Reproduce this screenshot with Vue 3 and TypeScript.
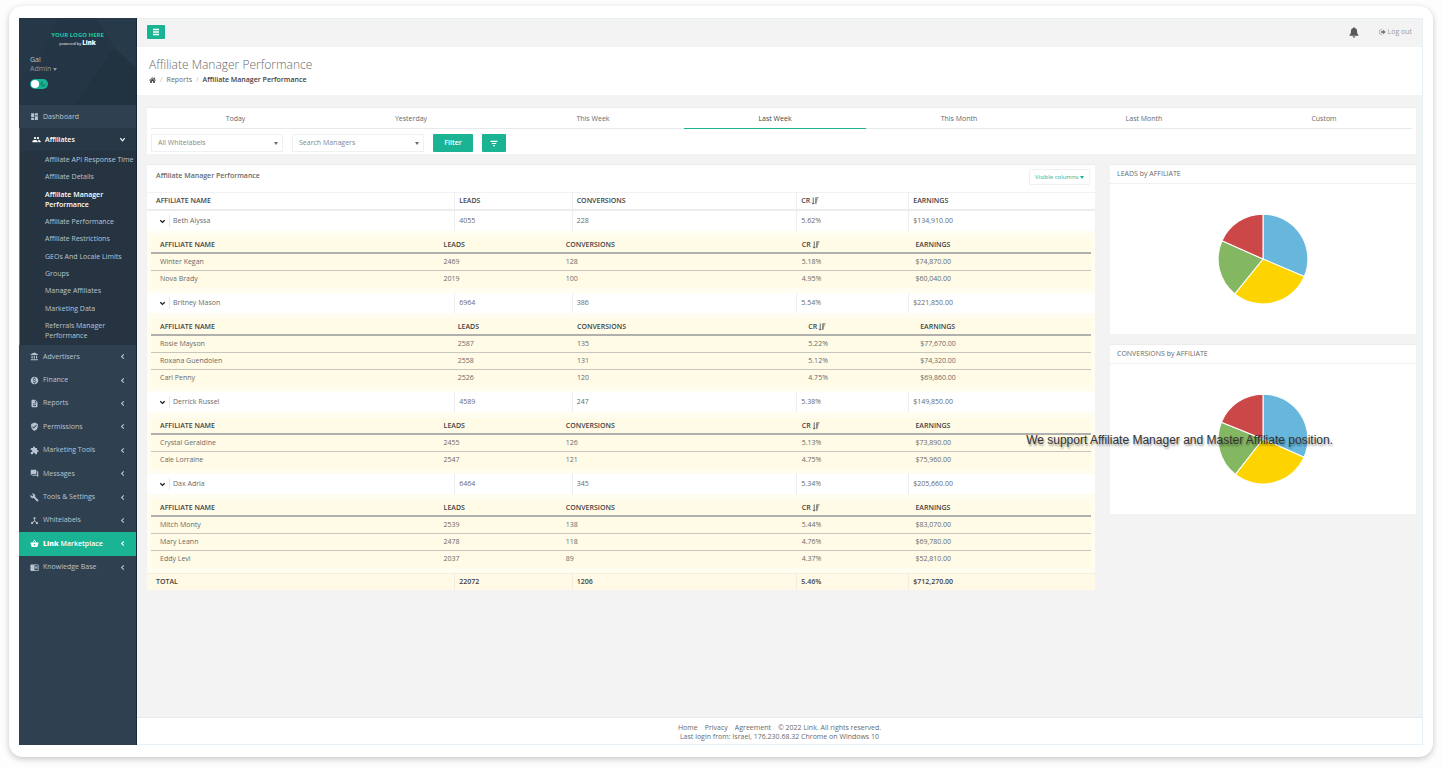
<script setup lang="ts">
import { ref } from 'vue'

interface NavItem {
  label: string
  icon: string
  brand?: boolean
}

interface Stat {
  name: string
  leads: string
  conversions: string
  cr: string
  earnings: string
}

interface Manager extends Stat {
  affiliates: Stat[]
  wide?: boolean
}

interface Slice {
  color: string
  d: string
}

const icons = {
  dashboard: 'M3 13h8V3H3v10zm0 8h8v-6H3v6zm10 0h8V11h-8v10zm0-18v6h8V3h-8z',
  group:
    'M16 11c1.66 0 2.99-1.34 2.99-3S17.66 5 16 5s-3 1.34-3 3 1.34 3 3 3zm-8 0c1.66 0 2.99-1.34 2.99-3S9.66 5 8 5 5 6.34 5 8s1.34 3 3 3zm0 2c-2.33 0-7 1.17-7 3.5V19h14v-2.5c0-2.33-4.67-3.5-7-3.5zm8 0c-.29 0-.62.02-.97.05 1.16.84 1.97 1.97 1.97 3.45V19h6v-2.5c0-2.33-4.67-3.5-7-3.5z',
  bank: 'M4 10v7h3v-7H4zm6 0v7h3v-7h-3zM2 22h19v-3H2v3zm14-12v7h3v-7h-3zM11.5 1L2 6v2h19V6l-9.5-5z',
  money:
    'M12 2C6.48 2 2 6.48 2 12s4.48 10 10 10 10-4.48 10-10S17.52 2 12 2zm1.41 16.09V20h-2.67v-1.93c-1.71-.36-3.16-1.46-3.27-3.4h1.96c.1 1.05.82 1.87 2.65 1.87 1.96 0 2.4-.98 2.4-1.59 0-.83-.44-1.61-2.67-2.14-2.48-.6-4.18-1.62-4.18-3.67 0-1.72 1.39-2.84 3.11-3.21V4h2.67v1.95c1.86.45 2.79 1.86 2.85 3.39H14.3c-.05-1.11-.64-1.87-2.22-1.87-1.5 0-2.4.68-2.4 1.64 0 .84.65 1.39 2.67 1.91s4.18 1.39 4.18 3.91c-.01 1.83-1.38 2.83-3.12 3.16z',
  file: 'M14 2H6c-1.1 0-1.99.9-1.99 2L4 20c0 1.1.89 2 1.99 2H18c1.1 0 2-.9 2-2V8l-6-6zm2 16H8v-2h8v2zm0-4H8v-2h8v2zm-3-5V3.5L18.5 9H13z',
  shield:
    'M12 1L3 5v6c0 5.55 3.84 10.74 9 12 5.16-1.26 9-6.45 9-12V5l-9-4zm-2 16l-4-4 1.41-1.41L10 14.17l6.59-6.59L18 9l-8 8z',
  puzzle:
    'M20.5 11H19V7c0-1.1-.9-2-2-2h-4V3.5C13 2.12 11.88 1 10.5 1S8 2.12 8 3.5V5H4c-1.1 0-1.99.9-1.99 2v3.8H3.5c1.49 0 2.7 1.21 2.7 2.7s-1.21 2.7-2.7 2.7H2V20c0 1.1.9 2 2 2h3.8v-1.5c0-1.49 1.21-2.7 2.7-2.7 1.49 0 2.7 1.21 2.7 2.7V22H17c1.1 0 2-.9 2-2v-4h1.5c1.38 0 2.5-1.12 2.5-2.5S21.88 11 20.5 11z',
  chat: 'M21 6h-2v9H6v2c0 .55.45 1 1 1h11l4 4V7c0-.55-.45-1-1-1zm-4 6V3c0-.55-.45-1-1-1H3c-.55 0-1 .45-1 1v14l4-4h10c.55 0 1-.45 1-1z',
  wrench:
    'M22.700 19l-9.100-9.100c.9-2.300.4-5-1.500-6.900-2-2-5-2.400-7.400-1.300L9 6 6 9 1.600 4.700C.4 7.100.9 10.100 2.900 12.100c1.900 1.900 4.600 2.400 6.900 1.500l9.100 9.100c.4.4 1 .4 1.400 0l2.300-2.300c.5-.4.5-1.100.1-1.400z',
  hub: 'M17 16l-4-4V8.820C14.160 8.400 15 7.300 15 6c0-1.660-1.340-3-3-3S9 4.340 9 6c0 1.300.84 2.400 2 2.820V12l-4 4H3v5h5v-3.050l4-4.200 4 4.200V21h5v-5h-4z',
  basket:
    'M17.210 9l-4.380-6.560c-.19-.28-.51-.42-.83-.42-.32 0-.64.14-.83.430L6.790 9H2c-.55 0-1 .45-1 1 0 .09.010.18.040.27l2.540 9.270c.23.84 1 1.460 1.920 1.460h13c.92 0 1.690-.62 1.930-1.460l2.540-9.270L23 10c0-.55-.45-1-1-1h-4.790zM9 9l3-4.400L15 9H9zm3 8c-1.100 0-2-.9-2-2s.9-2 2-2 2 .9 2 2-.9 2-2 2z',
  book: 'M13 12h7v1.500h-7zm0-2.500h7V11h-7zm0 5h7V16h-7zM21 4H3c-1.100 0-2 .9-2 2v13c0 1.100.9 2 2 2h18c1.100 0 2-.9 2-2V6c0-1.100-.9-2-2-2zm0 15h-9V6h9v13z',
}

const nav: NavItem[] = [
  { label: 'Advertisers', icon: icons.bank },
  { label: 'Finance', icon: icons.money },
  { label: 'Reports', icon: icons.file },
  { label: 'Permissions', icon: icons.shield },
  { label: 'Marketing Tools', icon: icons.puzzle },
  { label: 'Messages', icon: icons.chat },
  { label: 'Tools & Settings', icon: icons.wrench },
  { label: 'Whitelabels', icon: icons.hub },
  { label: 'Marketplace', icon: icons.basket, brand: true },
  { label: 'Knowledge Base', icon: icons.book },
]

const subNav = [
  'Affiliate API Response Time',
  'Affiliate Details',
  'Affiliate Manager Performance',
  'Affiliate Performance',
  'Affiliate Restrictions',
  'GEOs And Locale Limits',
  'Groups',
  'Manage Affiliates',
  'Marketing Data',
  'Referrals Manager Performance',
]
const activeSub = 'Affiliate Manager Performance'

const periods = ['Today', 'Yesterday', 'This Week', 'Last Week', 'This Month', 'Last Month', 'Custom']
const period = ref('Last Week')
const darkMode = ref(false)

const stat = (name: string, leads: string, conversions: string, cr: string, earnings: string): Stat => ({
  name,
  leads,
  conversions,
  cr,
  earnings,
})

const managers: Manager[] = [
  {
    ...stat('Beth Alyssa', '4055', '228', '5.62%', '$134,910.00'),
    affiliates: [
      stat('Winter Kegan', '2469', '128', '5.18%', '$74,870.00'),
      stat('Nova Brady', '2019', '100', '4.95%', '$60,040.00'),
    ],
  },
  {
    ...stat('Britney Mason', '6964', '386', '5.54%', '$221,850.00'),
    wide: true,
    affiliates: [
      stat('Rosie Mayson', '2587', '135', '5.22%', '$77,670.00'),
      stat('Roxana Guendolen', '2558', '131', '5.12%', '$74,320.00'),
      stat('Carl Penny', '2526', '120', '4.75%', '$69,860.00'),
    ],
  },
  {
    ...stat('Derrick Russel', '4589', '247', '5.38%', '$149,850.00'),
    affiliates: [
      stat('Crystal Geraldine', '2455', '126', '5.13%', '$73,890.00'),
      stat('Cale Lorraine', '2547', '121', '4.75%', '$75,960.00'),
    ],
  },
  {
    ...stat('Dax Adria', '6464', '345', '5.34%', '$205,660.00'),
    affiliates: [
      stat('Mitch Monty', '2539', '138', '5.44%', '$83,070.00'),
      stat('Mary Leann', '2478', '118', '4.76%', '$69,780.00'),
      stat('Eddy Levi', '2037', '89', '4.37%', '$52,810.00'),
    ],
  },
]

const sliceColors = ['#67b7dc', '#fdd400', '#84b761', '#cc4748']

function slices(stops: number[]): Slice[] {
  const at = (deg: number) => {
    const a = (deg * Math.PI) / 180
    return `${(50 + 44 * Math.sin(a)).toFixed(2)} ${(50 - 44 * Math.cos(a)).toFixed(2)}`
  }
  return sliceColors.map((color, i) => {
    const from = i === 0 ? 0 : stops[i - 1]
    const to = i === 3 ? 360 : stops[i]
    return { color, d: `M50 50L${at(from)}A44 44 0 0 1 ${at(to)}Z` }
  })
}

const charts = [
  { title: 'LEADS by AFFILIATE', slices: slices([113, 219, 294]) },
  { title: 'CONVERSIONS by AFFILIATE', slices: slices([114, 218, 292]) },
]
</script>

<template>
  <div class="page">
    <div class="frame">
      <aside class="sidebar">
        <div class="profile">
          <svg class="facets" viewBox="0 0 118 87" preserveAspectRatio="none" aria-hidden="true">
            <path d="M56 87L96 30L118 12V87Z" fill="#213240" />
            <path d="M78 0H118V50L96 30Z" fill="#273a4a" />
            <path d="M0 0H40L22 40L0 62Z" fill="#263847" />
          </svg>
          <div class="logo">YOUR LOGO HERE</div>
          <div class="powered">powered by <b>Link</b></div>
          <div class="user">Gal</div>
          <button class="role" type="button">Admin <i class="caret"></i></button>
          <label class="toggle">
            <input v-model="darkMode" type="checkbox" aria-label="Dark mode" />
            <span class="knob"></span>
            <svg viewBox="0 0 12 12" aria-hidden="true">
              <path d="M5 1.500A4.600 4.600 0 1 0 10.500 7.500A4 4 0 0 1 5 1.500Z" fill="none" stroke="#0d6b57" stroke-width="1.500" />
            </svg>
          </label>
        </div>
        <nav>
          <a class="item dash" href="#">
            <svg class="ico" viewBox="0 0 24 24"><path :d="icons.dashboard" /></svg>
            <span>Dashboard</span>
          </a>
          <div class="open">
            <a class="item current" href="#">
              <svg class="ico" viewBox="0 0 24 24"><path :d="icons.group" /></svg>
              <span>Affiliates</span>
              <svg class="chev" viewBox="0 0 8 8"><path d="M1.500 2.500L4 5.500L6.500 2.500" /></svg>
            </a>
            <ul class="sub">
              <li v-for="s in subNav" :key="s">
                <a href="#" :class="{ on: s === activeSub }">{{ s }}</a>
              </li>
            </ul>
          </div>
          <ul class="main-nav">
            <li v-for="n in nav" :key="n.label" :class="{ market: n.brand }">
              <a class="item" href="#">
                <svg class="ico" viewBox="0 0 24 24"><path :d="n.icon" /></svg>
                <span><b v-if="n.brand" class="brand">Link</b> {{ n.label }}</span>
                <svg class="chev" viewBox="0 0 8 8"><path d="M5.500 1.500L3 4L5.500 6.500" /></svg>
              </a>
            </li>
          </ul>
        </nav>
      </aside>

      <div class="main">
        <header class="topbar">
          <button class="green burger" type="button" aria-label="Toggle menu">
            <svg viewBox="0 0 8 8"><path d="M1 1.500H7M1 4H7M1 6.500H7" stroke="#fff" stroke-width="1.500" /></svg>
          </button>
          <div class="actions">
            <button class="bell" type="button" aria-label="Notifications">
              <svg viewBox="0 0 16 18">
                <path
                  d="M8 .5C7.200.5 6.700 1 6.700 1.800C4.300 2.400 3 4.300 3 7C3 10.500 2 12 .5 13.500V14.500H15.500V13.500C14 12 13 10.500 13 7C13 4.300 11.700 2.400 9.300 1.800C9.300 1 8.800.5 8 .5ZM5.800 15.300C6 16.700 6.800 17.500 8 17.500S10 16.700 10.200 15.300Z"
                  fill="#55595c"
                />
              </svg>
            </button>
            <a class="logout" href="#">
              <svg viewBox="0 0 14 12">
                <path d="M6 1.500H3A1.500 1.500 0 0 0 1.500 3V9A1.500 1.500 0 0 0 3 10.500H6" fill="none" stroke="currentColor" stroke-width="1.500" />
                <path d="M8 1.200L13.500 6L8 10.800V7.800H4.500V4.200H8Z" fill="#777a7d" />
              </svg>
              Log out
            </a>
          </div>
        </header>

        <div class="heading">
          <h1>Affiliate Manager Performance</h1>
          <div class="crumbs">
            <a href="#" aria-label="Home">
              <svg viewBox="0 0 14 12">
                <path d="M7 .5L0 6.500L1 7.500L7 2.500L13 7.500L14 6.500L11.800 4.600V1H10V3.100ZM7 3.700L2.200 7.700V12H5.700V8.500H8.300V12H11.800V7.700Z" fill="#4a4d50" />
              </svg>
            </a>
            <span class="slash">/</span>
            <a href="#">Reports</a>
            <span class="slash">/</span>
            <strong>Affiliate Manager Performance</strong>
          </div>
        </div>

        <main class="content">
          <section class="filters">
            <div class="tabs">
              <button v-for="p in periods" :key="p" type="button" :class="{ on: p === period }" @click="period = p">
                {{ p }}
              </button>
            </div>
            <div class="controls">
              <div class="select">
                <select aria-label="Whitelabels"><option>All Whitelabels</option></select>
                <i class="caret"></i>
              </div>
              <div class="select">
                <select aria-label="Managers"><option>Search Managers</option></select>
                <i class="caret"></i>
              </div>
              <button class="green apply" type="button">Filter</button>
              <button class="green more" type="button" aria-label="More filters">
                <svg viewBox="0 0 9 8"><path d="M.5 1.500H8.500M2 4H7M3.500 6.500H5.500" stroke="#fff" stroke-width="1.300" /></svg>
              </button>
            </div>
          </section>

          <div class="columns">
            <section class="report">
              <div class="report-head">
                <h2>Affiliate Manager Performance</h2>
                <button class="visible" type="button">Visible columns <i class="caret"></i></button>
              </div>
              <table class="grid outer">
                <colgroup>
                  <col class="c1" /><col class="c2" /><col class="c3" /><col class="c4" /><col />
                </colgroup>
                <thead>
                  <tr>
                    <th>AFFILIATE NAME</th>
                    <th>LEADS</th>
                    <th>CONVERSIONS</th>
                    <th>
                      CR<svg class="sort" viewBox="0 0 8 9"><path d="M2 .5V8M.5 6.500L2 8L3.500 6.500M4.500 1H8M4.500 3.300H7M4.500 5.500H6M5 1V8" /></svg>
                    </th>
                    <th>EARNINGS</th>
                  </tr>
                </thead>
                <tbody v-for="m in managers" :key="m.name">
                  <tr class="manager">
                    <td>
                      <div class="who">
                        <button type="button" :aria-label="'Collapse ' + m.name">
                          <svg viewBox="0 0 8 8"><path d="M1.500 2.500L4 5L6.500 2.500" /></svg>
                        </button>
                        <span>{{ m.name }}</span>
                      </div>
                    </td>
                    <td>{{ m.leads }}</td>
                    <td>{{ m.conversions }}</td>
                    <td>{{ m.cr }}</td>
                    <td>{{ m.earnings }}</td>
                  </tr>
                  <tr class="detail">
                    <td colspan="5">
                      <table class="grid inner" :class="{ wide: m.wide }">
                        <colgroup>
                          <col class="c1" /><col class="c2" /><col class="c3" /><col class="c4" /><col />
                        </colgroup>
                        <thead>
                          <tr>
                            <th>AFFILIATE NAME</th>
                            <th>LEADS</th>
                            <th>CONVERSIONS</th>
                            <th>
                              CR<svg class="sort" viewBox="0 0 8 9"><path d="M2 .5V8M.5 6.500L2 8L3.500 6.500M4.500 1H8M4.500 3.300H7M4.500 5.500H6M5 1V8" /></svg>
                            </th>
                            <th>EARNINGS</th>
                          </tr>
                        </thead>
                        <tbody>
                          <tr v-for="a in m.affiliates" :key="a.name">
                            <td>{{ a.name }}</td>
                            <td>{{ a.leads }}</td>
                            <td>{{ a.conversions }}</td>
                            <td>{{ a.cr }}</td>
                            <td>{{ a.earnings }}</td>
                          </tr>
                        </tbody>
                      </table>
                    </td>
                  </tr>
                </tbody>
                <tfoot>
                  <tr>
                    <th>TOTAL</th>
                    <td>22072</td>
                    <td>1206</td>
                    <td>5.46%</td>
                    <td>$712,270.00</td>
                  </tr>
                </tfoot>
              </table>
            </section>

            <div class="charts">
              <section v-for="c in charts" :key="c.title" class="chart">
                <h3>{{ c.title }}</h3>
                <div class="plot">
                  <svg viewBox="0 0 100 100" role="img" :aria-label="c.title">
                    <path v-for="s in c.slices" :key="s.color" :d="s.d" :fill="s.color" stroke="#fff" stroke-width="1" stroke-linejoin="round" />
                  </svg>
                </div>
              </section>
              <p class="caption">We support Affiliate Manager and Master Affiliate position.</p>
            </div>
          </div>
        </main>

        <footer class="footer">
          <div class="links">
            <a href="#">Home</a><a href="#">Privacy</a><a href="#">Agreement</a>
            <span>© 2022 Link. All rights reserved.</span>
          </div>
          <div>Last login from: Israel, 176.230.68.32 Chrome on Windows 10</div>
        </footer>
      </div>
    </div>
  </div>
</template>

<style>
body {
  background: #fdfdfd;
}
</style>

<style scoped>
.page,
.page * {
  box-sizing: border-box;
}
.page {
  min-height: 100vh;
  padding: 6px 9px 12px;
  display: flex;
  font: 7px/10px 'Open Sans', 'Noto Sans', sans-serif;
  color: #676a6c;
}
.page button,
.page select {
  font: inherit;
  color: inherit;
  border: 0;
  background: none;
  padding: 0;
  margin: 0;
  cursor: pointer;
}
a {
  color: inherit;
  text-decoration: none;
}
ul {
  list-style: none;
  margin: 0;
  padding: 0;
}
h1,
h2,
h3,
p {
  margin: 0;
}
.frame {
  flex: 1;
  min-width: 0;
  display: flex;
  padding: 12px 10px;
  background: #fff;
  border-radius: 14px;
  box-shadow: 0 2px 6px rgba(0, 0, 0, 0.22);
}
.caret {
  display: inline-block;
  border: 2px solid transparent;
  border-top: 3px solid currentColor;
  border-bottom: 0;
  vertical-align: middle;
}

/* sidebar */
.sidebar {
  flex: 0 0 118px;
  background: #2f4050;
  border-right: 1px solid #17283a;
  color: #b9c4d2;
  font-weight: 500;
}
.profile {
  position: relative;
  height: 87px;
  padding: 12px 11px 0;
  background: #243545;
}
.facets {
  position: absolute;
  inset: 0;
  width: 100%;
  height: 100%;
}
.profile > :not(.facets) {
  position: relative;
}
.logo {
  font-size: 6px;
  line-height: 10px;
  font-weight: 700;
  color: #1fc8a2;
  text-align: center;
}
.powered {
  font-size: 4px;
  line-height: 6px;
  text-align: center;
  color: #fff;
}
.powered b {
  font-size: 6px;
  font-weight: 800;
}
.user {
  margin-top: 8px;
  line-height: 9px;
}
.page .role {
  display: block;
  line-height: 9px;
  color: #8c99a8;
  font-weight: 400;
}
.toggle {
  display: flex;
  align-items: center;
  justify-content: space-between;
  width: 18px;
  height: 10px;
  margin-top: 6px;
  padding: 0 2px 0 1px;
  border-radius: 5px;
  background: #1ab394;
  cursor: pointer;
}
.toggle input {
  position: absolute;
  inset: 0;
  margin: 0;
  opacity: 0;
}
.knob {
  width: 8px;
  height: 8px;
  border-radius: 50%;
  background: #fff;
}
.toggle svg {
  width: 6px;
  height: 6px;
}
.item {
  display: flex;
  align-items: center;
  height: 23px;
  padding: 0 10px 0 11px;
}
.item span {
  flex: 1;
}
.ico {
  width: 9px;
  height: 9px;
  margin-right: 4px;
  fill: currentColor;
}
.chev {
  width: 7px;
  height: 7px;
  fill: none;
  stroke: currentColor;
  stroke-width: 1.3px;
}
.open {
  background: #263442;
  border-left: 1px solid #19aa8d;
}
.item.current {
  background: #293846;
  color: #fff;
  padding-left: 12px;
  font-weight: 600;
}
.sub {
  display: flex;
  flex-direction: column;
  justify-content: space-between;
  min-height: 194px;
  padding: 4px 0 4px 25px;
}
.sub a {
  display: block;
  line-height: 10px;
}
.sub .on {
  color: #fff;
  font-weight: 600;
}
.sub li:nth-child(3),
.sub li:last-child {
  padding-right: 24px;
}
.main-nav {
  display: grid;
  grid-auto-rows: 1fr;
  height: 234px;
}
.main-nav .item {
  height: 100%;
}
.market {
  background: #1ab394;
  color: #fff;
  font-weight: 600;
}
.brand {
  font-weight: 800;
}

/* header */
.main {
  flex: 1;
  min-width: 0;
  display: flex;
  flex-direction: column;
  border: 1px solid #e6f0f5;
  border-left: 0;
}
.topbar {
  display: flex;
  align-items: center;
  justify-content: space-between;
  height: 28px;
  padding: 0 10px 2px;
  background: #f3f3f4;
}
.page .green {
  display: flex;
  align-items: center;
  justify-content: center;
  background: #1ab394;
  color: #fff;
  border-radius: 1px;
}
.page .burger {
  width: 18px;
  height: 14px;
}
.burger svg {
  width: 8px;
  height: 8px;
}
.actions {
  display: flex;
  align-items: center;
  gap: 20px;
}
.bell svg {
  display: block;
  width: 10px;
  height: 11px;
}
.logout {
  display: flex;
  align-items: center;
  gap: 2px;
  color: #999c9e;
}
.logout svg {
  width: 7px;
  height: 6px;
}
.heading {
  height: 48px;
  padding: 10px 12px 0;
  background: #fff;
}
h1 {
  font-size: 12px;
  line-height: 16px;
  font-weight: 300;
}
.crumbs {
  display: flex;
  align-items: center;
  gap: 4px;
  margin-top: 2px;
}
.crumbs svg {
  display: block;
  width: 7px;
  height: 6px;
}
.slash {
  color: #bbb;
}
.crumbs strong {
  font-weight: 600;
  color: #3f4245;
}

/* content */
.content {
  flex: 1;
  padding: 12px 6px 12px 10px;
  background: #f3f3f4;
}
.filters {
  background: #fff;
  padding: 0 4px 2px;
  border-top: 1px solid #ececec;
}
.tabs {
  display: grid;
  grid-template-columns: 169fr 182fr 182fr 182fr 186fr 184fr 176fr;
  border-bottom: 1px solid #e7eaec;
}
.page .tabs button {
  height: 21px;
  padding-top: 2px;
  margin-bottom: -1px;
  border-bottom: 1px solid transparent;
}
.page .tabs .on {
  border-bottom-color: #1ab394;
  font-weight: 500;
  color: #444;
}
.controls {
  display: flex;
  align-items: center;
  gap: 9px;
  margin-top: 5px;
}
.select {
  position: relative;
  width: 132px;
}
.page .select select {
  display: block;
  appearance: none;
  width: 100%;
  height: 18px;
  padding: 0 6px;
  border: 1px solid #eef0f1;
  background: #fff;
  color: #84878a;
}
.select .caret {
  position: absolute;
  right: 5px;
  top: 8px;
}
.page .apply {
  width: 40px;
  height: 18px;
  font-weight: 600;
}
.page .more {
  width: 24px;
  height: 18px;
}
.more svg {
  width: 8px;
  height: 7px;
}
.columns {
  display: grid;
  grid-template-columns: 948fr 306fr;
  gap: 15px;
  align-items: start;
  margin-top: 10px;
}
.report {
  background: #fff;
  border-top: 1px solid #ececec;
}
.report-head {
  display: flex;
  justify-content: space-between;
  height: 27px;
  padding: 4px 5px 0 9px;
}
h2 {
  font-size: 7px;
  line-height: 13px;
  font-weight: 600;
}
.page .visible {
  height: 16px;
  padding: 0 5px;
  border: 1px solid #eef0f1;
  border-radius: 1px;
  color: #1ab394;
  font-size: 6px;
  font-weight: 500;
}
.grid {
  width: 100%;
  table-layout: fixed;
  border-collapse: separate;
  border-spacing: 0;
}
.grid th,
.grid td {
  padding: 0 0 0 4px;
  text-align: left;
  white-space: nowrap;
}
.grid th {
  font-weight: 600;
  color: #3f4245;
}
.sort {
  width: 8px;
  height: 8px;
  margin-left: 1px;
  vertical-align: middle;
  fill: none;
  stroke: #55585a;
  stroke-width: 1px;
}
.outer .c1 {
  width: 32.4%;
}
.outer .c2 {
  width: 12.4%;
}
.outer .c3 {
  width: 23.7%;
}
.outer .c4 {
  width: 11.8%;
}
.outer .inner .c1 {
  width: 30.7%;
}
.outer .inner .c2 {
  width: 13%;
}
.outer .inner .c3 {
  width: 25.1%;
}
.outer .inner .c4 {
  width: 12.1%;
}
.outer .wide .c1 {
  width: 32.2%;
}
.outer .wide .c2 {
  width: 12.7%;
}
.outer .wide .c3 {
  width: 24.6%;
}
.outer .wide .c4 {
  width: 11.9%;
}
.outer > thead th {
  height: 19px;
  border-top: 1px solid #f0f2f3;
  border-bottom: 2px solid #ebecee;
  border-left: 1px solid #eceef0;
}
.manager td {
  height: 20px;
  border-left: 1px solid #eceef0;
}
.outer > thead th:first-child,
.outer > tfoot th:first-child {
  padding-left: 9px;
  border-left: 0;
}
.outer > tbody > .manager > td:first-child {
  border-left: 0;
  padding-left: 12px;
}
.who {
  display: flex;
  align-items: center;
}
.page .who button {
  display: flex;
  align-items: center;
  width: 11px;
  height: 12px;
  margin-right: 3px;
  border-right: 1px solid #e7eaec;
}
.who svg {
  width: 7px;
  height: 7px;
  fill: none;
  stroke: #222;
  stroke-width: 1.6px;
}
.outer > tbody > .detail > td {
  padding: 6px 4px 5px;
  background: #fffdef;
}
.inner {
  background: #fffbe6;
}
.grid.inner th {
  height: 17px;
  border-bottom: 2px solid #b0b1ac;
}
.grid.inner td {
  height: 17px;
  border-bottom: 1px solid #c8c7bf;
}
.grid.inner tr:last-child td {
  border-bottom-color: transparent;
}
.grid.inner th:first-child,
.grid.inner td:first-child {
  padding-left: 9px;
}
.outer > tfoot th,
.outer > tfoot td {
  height: 17px;
  background: #fff9e5;
  border-top: 1px solid #f3f0e2;
  border-left: 1px solid #f1eedf;
  font-weight: 600;
  color: #3f4245;
}

/* charts */
.charts {
  position: relative;
  display: grid;
  gap: 10px;
}
.chart {
  background: #fff;
  border-top: 1px solid #ececec;
}
h3 {
  height: 19px;
  padding: 0 7px;
  border-bottom: 1px solid #f0f1f2;
  font-size: 7px;
  line-height: 18px;
  font-weight: 400;
}
.plot {
  display: flex;
  justify-content: center;
  padding: 24px 0;
}
.plot svg {
  width: 102px;
  height: 102px;
}
.caption {
  position: absolute;
  right: 83px;
  top: 268px;
  font: 12px/16px 'Liberation Sans', Arial, sans-serif;
  color: #333;
  white-space: nowrap;
  text-shadow: 1px 2px 2px rgba(0, 0, 0, 0.4);
}

/* footer */
.footer {
  height: 27px;
  padding: 5px 0 0;
  background: #fff;
  border-top: 1px solid #e7eaec;
  text-align: center;
  line-height: 9px;
}
.links {
  display: flex;
  justify-content: center;
  gap: 7px;
}
</style>
